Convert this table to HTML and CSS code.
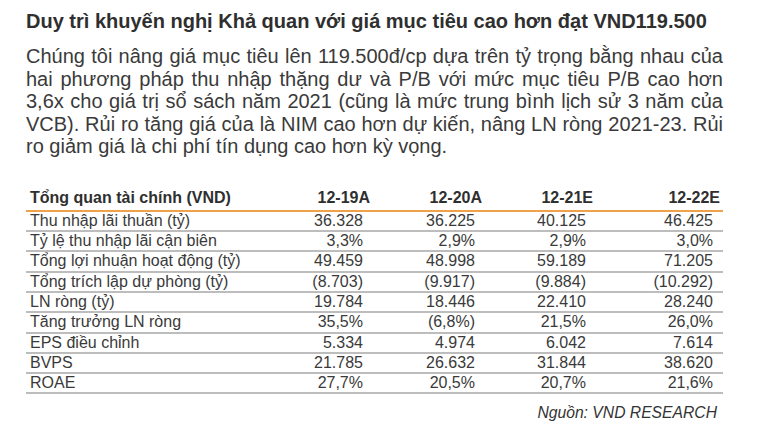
FILE: index.html
```html
<!DOCTYPE html>
<html lang="vi">
<head>
<meta charset="utf-8">
<title>VCB</title>
<link rel="stylesheet" href="styles.css">
</head>
<body>
<main class="page">
  <h1 class="title">Duy trì khuyến nghị Khả quan với giá mục tiêu cao hơn đạt VND119.500</h1>
  <p class="lead">Chúng tôi nâng giá mục tiêu lên 119.500đ/cp dựa trên tỷ trọng bằng nhau của hai phương pháp thu nhập thặng dư và P/B với mức mục tiêu P/B cao hơn 3,6x cho giá trị sổ sách năm 2021 (cũng là mức trung bình lịch sử 3 năm của VCB). Rủi ro tăng giá của là NIM cao hơn dự kiến, nâng LN ròng 2021-23. Rủi ro giảm giá là chi phí tín dụng cao hơn kỳ vọng.</p>
  <table class="fin">
    <colgroup>
      <col class="c-label"><col class="c-y1"><col class="c-y2"><col class="c-y3"><col class="c-y4">
    </colgroup>
    <thead>
      <tr><th class="label">Tổng quan tài chính (VND)</th><th>12-19A</th><th>12-20A</th><th>12-21E</th><th>12-22E</th></tr>
    </thead>
    <tbody>
      <tr><td class="label">Thu nhập lãi thuần (tỷ)</td><td>36.328</td><td>36.225</td><td>40.125</td><td>46.425</td></tr>
      <tr><td class="label">Tỷ lệ thu nhập lãi cận biên</td><td>3,3%</td><td>2,9%</td><td>2,9%</td><td>3,0%</td></tr>
      <tr><td class="label">Tổng lợi nhuận hoạt động (tỷ)</td><td>49.459</td><td>48.998</td><td>59.189</td><td>71.205</td></tr>
      <tr><td class="label">Tổng trích lập dự phòng (tỷ)</td><td>(8.703)</td><td>(9.917)</td><td>(9.884)</td><td>(10.292)</td></tr>
      <tr><td class="label">LN ròng (tỷ)</td><td>19.784</td><td>18.446</td><td>22.410</td><td>28.240</td></tr>
      <tr><td class="label">Tăng trưởng LN ròng</td><td>35,5%</td><td>(6,8%)</td><td>21,5%</td><td>26,0%</td></tr>
      <tr><td class="label">EPS điều chỉnh</td><td>5.334</td><td>4.974</td><td>6.042</td><td>7.614</td></tr>
      <tr><td class="label">BVPS</td><td>21.785</td><td>26.632</td><td>31.844</td><td>38.620</td></tr>
      <tr><td class="label">ROAE</td><td>27,7%</td><td>20,5%</td><td>20,7%</td><td>21,6%</td></tr>
    </tbody>
  </table>
  <p class="source">Nguồn: VND RESEARCH</p>
</main>
</body>
</html>
```

FILE: styles.css
```css
html, body {
  margin: 0;
  padding: 0;
  background: #ffffff;
}
.page {
  width: 697px;
  padding: 10px 0 0 26px;
  font-family: "Liberation Sans", Arial, sans-serif;
  color: #333333;
}
.title {
  margin: 0;
  font-size: 20px;
  line-height: 22px;
  font-weight: bold;
  color: #2f2f2f;
  white-space: nowrap;
}
.lead {
  margin: 13px 0 0 0;
  font-size: 20px;
  line-height: 22.5px;
  text-align: justify;
  color: #3a3a3a;
}
.fin {
  margin-top: 31px;
  width: 697px;
  border-collapse: collapse;
  table-layout: fixed;
  font-size: 16px;
  color: #3a3a3a;
}
.c-label { width: 235px; }
.c-y1 { width: 112px; }
.c-y2 { width: 112px; }
.c-y3 { width: 111px; }
.c-y4 { width: 127px; }
.fin th {
  font-weight: bold;
  line-height: 18.3px;
  padding: 0 3px 3px 0;
  text-align: right;
  border-bottom: 2px solid #f0a24a;
  color: #2f2f2f;
  white-space: nowrap;
}
.fin td {
  line-height: 18.3px;
  padding: 0 10px 0 0;
  text-align: right;
  border-bottom: 2px solid #bdbdbd;
  white-space: nowrap;
}
.fin .label {
  text-align: left;
  padding-left: 4px;
}
.source {
  margin: 10px 0 0 0;
  text-align: right;
  padding-right: 6px;
  font-size: 15.7px;
  line-height: 18px;
  font-style: italic;
  color: #333333;
}
```
